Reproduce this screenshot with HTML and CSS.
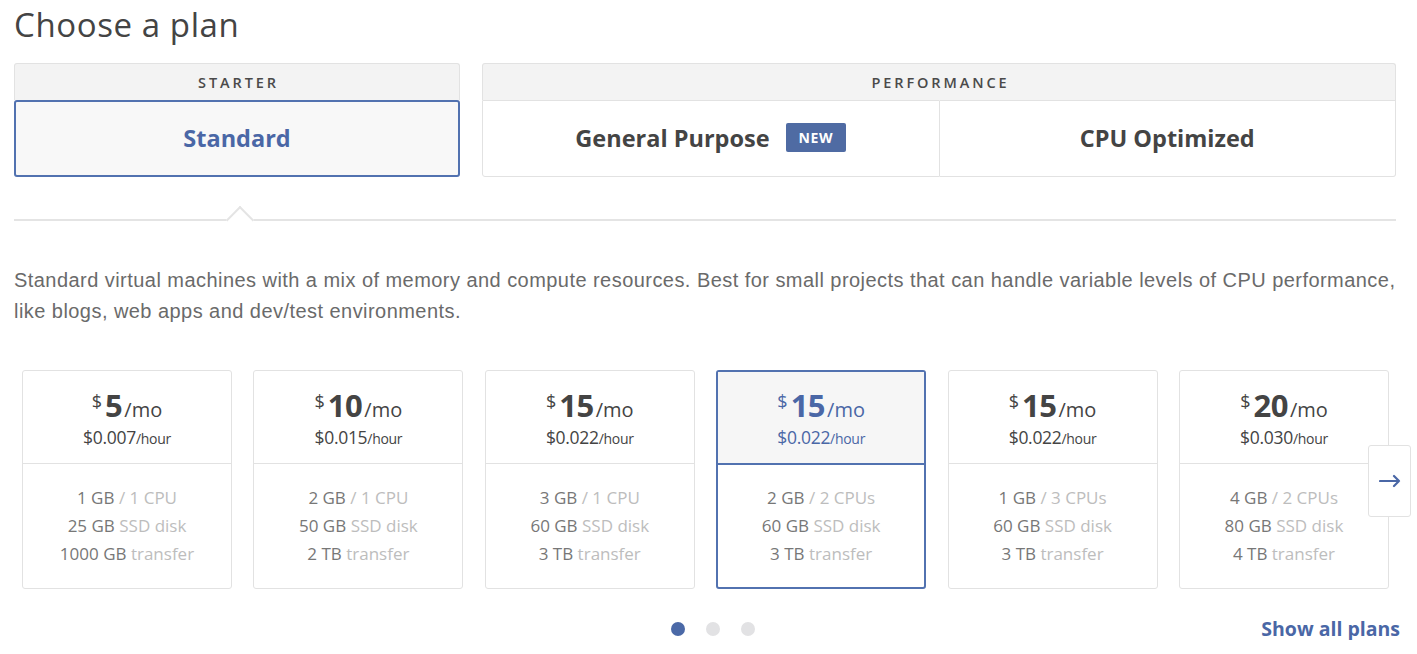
FILE: index.html
```html
<!DOCTYPE html>
<html>
<head>
<meta charset="utf-8">
<link rel="stylesheet" href="styles.css">
</head>
<body>
<div class="page">
  <h1 class="title">Choose a plan</h1>
  <div class="groups">
    <div class="group group-starter">
      <div class="group-head">STARTER</div>
      <div class="tabs">
        <div class="tab tab-active">Standard</div>
      </div>
    </div>
    <div class="group group-perf">
      <div class="group-head">PERFORMANCE</div>
      <div class="tabs">
        <div class="tab">General Purpose <span class="badge">NEW</span></div>
        <div class="tab tab-right">CPU Optimized</div>
      </div>
    </div>
  </div>
  <div class="divider"><span class="caret"></span></div>
  <p class="desc">Standard virtual machines with a mix of memory and compute resources. Best for small projects that can handle variable levels of CPU performance, like blogs, web apps and dev/test environments.</p>
  <div class="carousel">
    <div class="cards">
      <div class="card">
        <div class="card-top">
          <div class="price"><span class="cur">$</span><span class="amt">5</span><span class="per">/mo</span></div>
          <div class="hour">$0.007<span class="hr">/hour</span></div>
        </div>
        <div class="card-bottom">
          <div class="spec"><b>1 GB</b> / 1 CPU</div>
          <div class="spec"><b>25 GB</b> SSD disk</div>
          <div class="spec"><b>1000 GB</b> transfer</div>
        </div>
      </div>
      <div class="card">
        <div class="card-top">
          <div class="price"><span class="cur">$</span><span class="amt">10</span><span class="per">/mo</span></div>
          <div class="hour">$0.015<span class="hr">/hour</span></div>
        </div>
        <div class="card-bottom">
          <div class="spec"><b>2 GB</b> / 1 CPU</div>
          <div class="spec"><b>50 GB</b> SSD disk</div>
          <div class="spec"><b>2 TB</b> transfer</div>
        </div>
      </div>
      <div class="card">
        <div class="card-top">
          <div class="price"><span class="cur">$</span><span class="amt">15</span><span class="per">/mo</span></div>
          <div class="hour">$0.022<span class="hr">/hour</span></div>
        </div>
        <div class="card-bottom">
          <div class="spec"><b>3 GB</b> / 1 CPU</div>
          <div class="spec"><b>60 GB</b> SSD disk</div>
          <div class="spec"><b>3 TB</b> transfer</div>
        </div>
      </div>
      <div class="card card-selected">
        <div class="card-top">
          <div class="price"><span class="cur">$</span><span class="amt">15</span><span class="per">/mo</span></div>
          <div class="hour">$0.022<span class="hr">/hour</span></div>
        </div>
        <div class="card-bottom">
          <div class="spec"><b>2 GB</b> / 2 CPUs</div>
          <div class="spec"><b>60 GB</b> SSD disk</div>
          <div class="spec"><b>3 TB</b> transfer</div>
        </div>
      </div>
      <div class="card">
        <div class="card-top">
          <div class="price"><span class="cur">$</span><span class="amt">15</span><span class="per">/mo</span></div>
          <div class="hour">$0.022<span class="hr">/hour</span></div>
        </div>
        <div class="card-bottom">
          <div class="spec"><b>1 GB</b> / 3 CPUs</div>
          <div class="spec"><b>60 GB</b> SSD disk</div>
          <div class="spec"><b>3 TB</b> transfer</div>
        </div>
      </div>
      <div class="card">
        <div class="card-top">
          <div class="price"><span class="cur">$</span><span class="amt">20</span><span class="per">/mo</span></div>
          <div class="hour">$0.030<span class="hr">/hour</span></div>
        </div>
        <div class="card-bottom">
          <div class="spec"><b>4 GB</b> / 2 CPUs</div>
          <div class="spec"><b>80 GB</b> SSD disk</div>
          <div class="spec"><b>4 TB</b> transfer</div>
        </div>
      </div>
    </div>
    <button class="next" aria-label="Next">
      <svg width="22" height="14" viewBox="0 0 22 14"><path d="M1 7H20M15 2L20 7L15 12" fill="none" stroke="#4a67a6" stroke-width="2.2" stroke-linecap="round" stroke-linejoin="round"/></svg>
    </button>
  </div>
  <div class="footer">
    <div class="dots">
      <span class="dot dot-active"></span>
      <span class="dot"></span>
      <span class="dot"></span>
    </div>
    <a class="show-all" href="#">Show all plans</a>
  </div>
</div>
</body>
</html>
```

FILE: styles.css
```css
* { box-sizing: border-box; }
html, body { margin: 0; padding: 0; background: #fff; }
body { font-family: "Open Sans", "Liberation Sans", sans-serif; color: #444; }

.page { padding: 0 21px 0 14px; width: 1417px; }

.title {
  margin: 0;
  padding-top: 3px;
  height: 63px;
  font-size: 33px;
  font-weight: 400;
  color: #444;
  line-height: 44px;
  letter-spacing: 0.6px;
}

.groups { display: flex; gap: 22px; }
.group-starter { width: 446px; }
.group-perf { width: 914px; }

.group-head {
  height: 37px;
  background: #f3f3f3;
  border: 1px solid #e2e2e2;
  border-bottom: none;
  border-radius: 3px 3px 0 0;
  display: flex;
  align-items: center;
  justify-content: center;
  font-size: 14.5px;
  font-weight: 600;
  letter-spacing: 2.9px;
  color: #4a4a4a;
  padding-left: 3px;
}

.tabs { display: flex; height: 77px; }
.tab {
  flex: 1;
  display: flex;
  align-items: center;
  justify-content: center;
  font-size: 23.5px;
  font-weight: 700;
  color: #444;
  border: 1px solid #e2e2e2;
  background: #fff;
  padding-bottom: 2px;
}
.group-perf .tab:first-child { border-radius: 0 0 0 3px; }
.tab-right { border-left: none; border-radius: 0 0 3px 0; }
.tab-active {
  border: 2px solid #5272b0;
  border-radius: 3px;
  background: #f8f8f8;
  color: #4a67a6;
}

.badge {
  display: inline-block;
  margin-left: 16px;
  padding: 0 13px;
  height: 29px;
  line-height: 29px;
  background: #4f6ba3;
  color: #fff;
  font-size: 14px;
  font-weight: 700;
  letter-spacing: 0.6px;
  border-radius: 2px;
}

.divider {
  position: relative;
  margin-top: 42px;
  height: 2px;
  background: #e4e4e4;
  width: 1382px;
}
.caret {
  position: absolute;
  left: 216px;
  top: -9px;
  width: 20px;
  height: 20px;
  background: #fff;
  border-left: 2px solid #e4e4e4;
  border-top: 2px solid #e4e4e4;
  transform: rotate(45deg);
}

.desc {
  margin: 44px 0 0;
  width: 1390px;
  font-family: "Liberation Sans", Arial, sans-serif;
  font-size: 20px;
  letter-spacing: 0.45px;
  line-height: 31px;
  color: #6a6a6a;
}

.carousel { position: relative; margin-top: 43px; width: 1382px; }
.cards { display: flex; gap: 21.4px; padding-left: 8px; }
.card {
  width: 210px;
  height: 219px;
  border: 1px solid #e2e2e2;
  border-radius: 3px;
  background: #fff;
  display: flex;
  flex-direction: column;
  text-align: center;
}
.card-top {
  height: 93px;
  border-bottom: 1px solid #e2e2e2;
  padding-top: 15px;
}
.price { color: #444; line-height: 30px; }
.cur { font-size: 18px; vertical-align: 9px; margin-right: 3px; }
.amt { font-size: 31px; font-weight: 700; letter-spacing: -0.5px; }
.per { font-size: 20px; margin-left: 2px; }
.hour { font-size: 17.5px; color: #444; line-height: 22px; letter-spacing: -0.3px; }
.hr { font-size: 14px; }

.card-bottom { padding-top: 20px; }
.spec {
  font-size: 17px;
  line-height: 28px;
  color: #bdbdbd;
}
.spec b { font-weight: 400; color: #777; }

.card-selected { border: 2px solid #5272b0; }
.card-selected .card-top { background: #f6f6f6; border-bottom: 2px solid #5272b0; padding-top: 14px; height: 93px; }
.card-selected .price, .card-selected .hour { color: #4a67a6; }
.card-selected .card-bottom { padding-top: 19px; }

.next {
  position: absolute;
  left: 1354px;
  top: 75px;
  width: 43px;
  height: 72px;
  background: #fff;
  border: 1px solid #e2e2e2;
  border-radius: 3px;
  display: flex;
  align-items: center;
  justify-content: center;
  padding: 0;
}

.footer {
  position: relative;
  display: flex;
  justify-content: center;
  align-items: center;
  margin-top: 29px;
  width: 1390px;
  height: 22px;
}
.dots { display: flex; gap: 21px; margin-left: 8px; }
.dot { width: 14px; height: 14px; border-radius: 50%; background: #e2e2e4; }
.dot-active { background: #4b69a7; }
.show-all {
  position: absolute;
  right: 4px;
  top: -3px;
  font-size: 19.5px;
  font-weight: 700;
  color: #4a67a6;
  text-decoration: none;
}
```
